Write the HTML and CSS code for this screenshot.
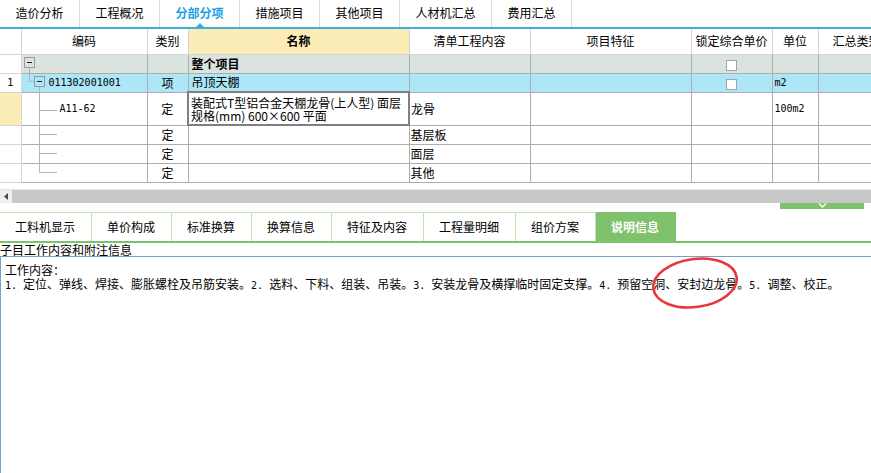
FILE: index.html
```html
<!DOCTYPE html>
<html lang="zh-CN">
<head>
<meta charset="utf-8">
<title>分部分项</title>
<link rel="stylesheet" href="styles.css">
</head>
<body>
<div class="app">
  <nav class="toptabs">
    <div class="ttab">造价分析</div>
    <div class="ttab">工程概况</div>
    <div class="ttab active">分部分项</div>
    <div class="ttab">措施项目</div>
    <div class="ttab">其他项目</div>
    <div class="ttab">人材机汇总</div>
    <div class="ttab">费用汇总</div>
  </nav>

  <table class="grid">
    <colgroup>
      <col class="c-num"><col class="c-code"><col class="c-type"><col class="c-name"><col class="c-list"><col class="c-feat"><col class="c-lock"><col class="c-unit"><col class="c-sum">
    </colgroup>
    <thead>
      <tr>
        <th class="num"></th>
        <th>编码</th>
        <th>类别</th>
        <th class="hname">名称</th>
        <th>清单工程内容</th>
        <th>项目特征</th>
        <th>锁定综合单价</th>
        <th>单位</th>
        <th class="hsum">汇总类别</th>
      </tr>
    </thead>
    <tbody>
      <tr class="r-root">
        <td class="num"></td>
        <td class="tree"><div class="tc">
          <svg width="27" height="18" viewBox="0 0 27 18"><rect x="2.5" y="2.5" width="10" height="10" fill="none" stroke="#9a9a9a"/><path d="M5 7.5h5" stroke="#222"/><path d="M7.5 13v5" stroke="#b5b5b5"/></svg>
        </div></td>
        <td></td>
        <td class="txt bold">整个项目</td>
        <td></td>
        <td></td>
        <td class="ctr"><span class="chk"></span></td>
        <td></td>
        <td></td>
      </tr>
      <tr class="r-item">
        <td class="num mono">1</td>
        <td class="tree"><div class="tc">
          <svg width="27" height="18" viewBox="0 0 27 18"><path d="M7.5 0v7.5H12" fill="none" stroke="#b5b5b5"/><rect x="12.5" y="2.5" width="10" height="10" fill="none" stroke="#9a9a9a"/><path d="M15 7.5h5" stroke="#222"/><path d="M17.5 13v5" stroke="#b5b5b5"/></svg>
          <span class="mono">011302001001</span>
        </div></td>
        <td class="ctr">项</td>
        <td class="txt">吊顶天棚</td>
        <td></td>
        <td></td>
        <td class="ctr"><span class="chk"></span></td>
        <td class="unit mono">m2</td>
        <td></td>
      </tr>
      <tr class="r-sub tall">
        <td class="num sel"></td>
        <td class="tree"><div class="tc tc-tall">
          <svg width="38" height="32" viewBox="0 0 38 32"><path d="M17.5 0v32M17.5 17.5H35" fill="none" stroke="#b5b5b5"/></svg>
          <span class="mono">A11-62</span>
        </div></td>
        <td class="ctr">定</td>
        <td class="edit"><div class="edit-text">装配式T型铝合金天棚龙骨(上人型) 面层<br>规格(mm) 600×600 平面</div></td>
        <td class="lst">龙骨</td>
        <td></td>
        <td></td>
        <td class="unit mono">100m2</td>
        <td></td>
      </tr>
      <tr class="r-sub">
        <td class="num"></td>
        <td class="tree"><div class="tc"><svg width="38" height="18" viewBox="0 0 38 18"><path d="M17.5 0v18M17.5 8.5H35" fill="none" stroke="#b5b5b5"/></svg></div></td>
        <td class="ctr">定</td>
        <td></td>
        <td class="lst">基层板</td>
        <td></td><td></td><td></td><td></td>
      </tr>
      <tr class="r-sub">
        <td class="num"></td>
        <td class="tree"><div class="tc"><svg width="38" height="18" viewBox="0 0 38 18"><path d="M17.5 0v18M17.5 8.5H35" fill="none" stroke="#b5b5b5"/></svg></div></td>
        <td class="ctr">定</td>
        <td></td>
        <td class="lst">面层</td>
        <td></td><td></td><td></td><td></td>
      </tr>
      <tr class="r-sub">
        <td class="num"></td>
        <td class="tree"><div class="tc"><svg width="38" height="18" viewBox="0 0 38 18"><path d="M17.5 0v8.5H35" fill="none" stroke="#b5b5b5"/></svg></div></td>
        <td class="ctr">定</td>
        <td></td>
        <td class="lst">其他</td>
        <td></td><td></td><td></td><td></td>
      </tr>
    </tbody>
  </table>

  <div class="hscroll">
    <div class="sbtn"><svg width="5" height="7" viewBox="0 0 5 7"><path d="M4 0v7L0 3.5z" fill="#4a4a4a"/></svg></div>
    <div class="strack"></div>
  </div>
  <div class="splitrow">
    <div class="splitter"><svg width="9" height="5" viewBox="0 0 9 5"><path d="M1 0.5l3.5 3.5 3.5-3.5" fill="none" stroke="#fff" stroke-width="1.3"/></svg></div>
  </div>

  <nav class="btabs">
    <div class="btab">工料机显示</div>
    <div class="btab">单价构成</div>
    <div class="btab">标准换算</div>
    <div class="btab">换算信息</div>
    <div class="btab">特征及内容</div>
    <div class="btab">工程量明细</div>
    <div class="btab">组价方案</div>
    <div class="btab active">说明信息</div>
  </nav>

  <div class="caption">子目工作内容和附注信息</div>
  <div class="detail">
    <p>工作内容：</p>
    <p><span class="n">1. </span>定位、弹线、焊接、膨胀螺栓及吊筋安装。<span class="n">2. </span>选料、下料、组装、吊装。<span class="n">3. </span>安装龙骨及横撑临时固定支撑。<span class="n">4. </span>预留空<span class="mark">洞、安封边龙骨<svg class="ring" width="90" height="54" viewBox="0 0 90 54"><ellipse cx="45" cy="27" rx="42" ry="24" transform="rotate(-8 45 27)" fill="none" stroke="#e8363a" stroke-width="2.6"/></svg></span>。<span class="n">5. </span>调整、校正。</p>
  </div>
</div>
</body>
</html>
```
FILE: styles.css
```css
* { box-sizing: border-box; margin: 0; padding: 0; }
html, body { width: 871px; height: 473px; overflow: hidden; background: #fff; }
body {
  font-family: "Noto Sans CJK SC", "Liberation Sans", sans-serif;
  font-size: 12px;
  line-height: 14px;
  color: #000;
}
.app {
  width: 871px;
  height: 473px;
  overflow: hidden;
  display: flex;
  flex-direction: column;
}

/* top tabs */
.toptabs {
  display: flex;
  height: 29px;
  flex: 0 0 29px;
  border-bottom: 2px solid #3daee0;
}
.ttab {
  position: relative;
  padding: 0 15.5px;
  border-right: 1px solid #dadada;
  line-height: 26px;
  white-space: nowrap;
}
.ttab.active { color: #1ba0e4; font-weight: bold; }
.ttab.active::after {
  content: "";
  position: absolute;
  left: 50%;
  bottom: 0;
  margin-left: -4px;
  border-left: 4px solid transparent;
  border-right: 4px solid transparent;
  border-bottom: 4px solid #3daee0;
}

/* grid */
.grid {
  border-collapse: collapse;
  table-layout: fixed;
  width: 898px;
  flex: 0 0 auto;
}
.c-num { width: 21px; }
.c-code { width: 126px; }
.c-type { width: 41px; }
.c-name { width: 221px; }
.c-list { width: 121px; }
.c-feat { width: 161px; }
.c-lock { width: 81px; }
.c-unit { width: 46px; }
.c-sum { width: 80px; }

.grid th, .grid td {
  border: 1px solid #adadad;
  padding: 0;
  white-space: nowrap;
  overflow: hidden;
  vertical-align: middle;
  font-weight: normal;
  height: 19px;
}
.grid th {
  border-color: #d4d4d4;
  border-top: 0;
  height: 25px;
  text-align: center;
  background: #fff;
}
.grid th.hname { background: #fcecb5; font-weight: bold; }
.grid th.hsum { text-align: left; padding-left: 14px; }
.grid th:first-child, .grid td:first-child { border-left: 0; }
.grid td.num { border-color: #d6d6d6; background: #fff; text-align: center; }
.grid td.num.sel { background: #fcecb5; }

.r-root td { background: #dbe3df; }
.r-item td { background: #ade7f7; }
.r-sub td { background: #fff; }
.grid tr.tall td { height: 33px; }

.txt { padding-left: 3px !important; }
.bold { font-weight: bold !important; }
.ctr { text-align: center; }
.lst { padding-left: 1px !important; }
.unit { padding-left: 2px !important; }

.mono {
  font-family: "DejaVu Sans Mono", "Liberation Mono", monospace;
  font-size: 10px;
}
.n {
  font-family: "DejaVu Sans Mono", "Liberation Mono", monospace;
  font-size: 10px;
  white-space: pre;
}

.tc { display: flex; align-items: center; height: 18px; }
.tc-tall { height: 32px; }
.tc svg { display: block; flex: 0 0 auto; }

.chk {
  display: inline-block;
  width: 11px;
  height: 11px;
  border: 1px solid #a4a4a4;
  background: #fff;
  vertical-align: middle;
}

.grid td.edit {
  border: 2px solid #7f7f7f;
  background: #fff;
}
.edit-text {
  padding-left: 2px;
  line-height: 13px;
  white-space: nowrap;
}

/* horizontal scrollbar */
.hscroll {
  display: flex;
  margin-top: 6px;
  height: 14px;
  flex: 0 0 14px;
  border-top: 1px solid #e4e4e4;
  background: #c8c8c8;
}
.sbtn {
  width: 12px;
  background: #efefef;
  display: flex;
  align-items: center;
  justify-content: center;
}
.strack { flex: 1; }

.splitrow {
  display: flex;
  justify-content: flex-end;
  padding-right: 7px;
  height: 6px;
  flex: 0 0 6px;
}
.splitter {
  width: 84px;
  background: #80c26b;
  display: flex;
  justify-content: center;
}
.splitter svg { display: block; }

/* bottom tabs */
.btabs {
  display: flex;
  margin-top: 3px;
  height: 31px;
  flex: 0 0 31px;
  border-bottom: 2px solid #7cc46a;
}
.btab {
  padding: 0 15.5px;
  border-top: 1px solid #bfe3b1;
  border-right: 1px solid #bfe3b1;
  line-height: 28px;
  white-space: nowrap;
}
.btab:first-child { padding-left: 15px; }
.btab.active {
  background: #80c26b;
  border-color: #80c26b;
  color: #fff;
  font-weight: bold;
}

.caption {
  height: 13px;
  line-height: 13px;
  flex: 0 0 13px;
  white-space: nowrap;
}
.detail {
  flex: 1;
  border-top: 1px solid #7b9ec5;
  border-left: 1px solid #7b9ec5;
  padding: 6px 0 0 4px;
  line-height: 14px;
  white-space: nowrap;
}
.mark { position: relative; }
.ring {
  position: absolute;
  left: -3px;
  top: 50%;
  margin-top: -27px;
  pointer-events: none;
}
```
